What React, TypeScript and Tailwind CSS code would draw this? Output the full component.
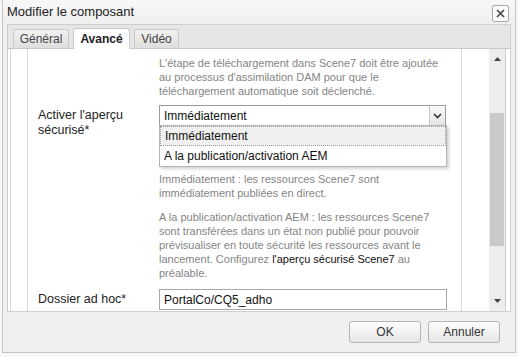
import React from "react"

const font = { fontFamily: '"Liberation Sans", Arial, sans-serif' }

const tabs = [
  { label: "Général", active: false, w: "w-[56px]" },
  { label: "Avancé", active: true, w: "w-[57px]" },
  { label: "Vidéo", active: false, w: "w-[45px]" },
]

function Chevron() {
  return (
    <svg width="9" height="6" viewBox="0 0 9 6">
      <path d="M1 1l3.5 3.5L8 1" fill="none" stroke="#333" strokeWidth="1.6" />
    </svg>
  )
}

export default function App() {
  return (
    <div className="w-[518px] h-[357px] bg-[#f7f7f7] pl-[2px] pr-[2px] pb-[4px]" style={font}>
      <div className="h-full flex flex-col bg-[#f0f0f0] border border-t-0 border-[#c4c4c4]">
        {/* Titre */}
        <div className="h-[24px] flex items-center justify-between pl-[4px] pr-[6px] bg-gradient-to-b from-[#f8f8f8] to-[#efefef]">
          <span className="text-[13px] text-[#222]">Modifier le composant</span>
          <button className="w-[17px] h-[17px] mt-[2px] border border-[#a8a8a8] rounded-[2px] bg-[#fbfbfb] flex items-center justify-center">
            <svg width="9" height="9" viewBox="0 0 9 9">
              <path d="M1 1l7 7M8 1l-7 7" stroke="#444" strokeWidth="1.6" />
            </svg>
          </button>
        </div>

        {/* Onglets + contenu */}
        <div className="mx-[4px] flex flex-col border border-[#cfcfcf] bg-[#e6e6e6]">
          <div className="h-[24px] flex items-end gap-[4px] pl-[5px] border-b border-[#c9c9c9]">
            {tabs.map((t) => (
              <div
                key={t.label}
                className={
                  t.active
                    ? `${t.w} h-[21px] flex items-center justify-center bg-white border border-b-0 border-[#c9c9c9] rounded-t-[3px] text-[12px] font-bold text-[#222] -mb-px`
                    : `${t.w} h-[19px] flex items-center justify-center bg-gradient-to-b from-[#f2f2f2] to-[#dedede] border border-b-0 border-[#c9c9c9] rounded-t-[3px] text-[12px] text-[#444]`
                }
              >
                {t.label}
              </div>
            ))}
          </div>

          <div className="h-[262px] flex bg-white pl-[2px] pr-[4px]">
            <div className="flex-1 flex border-l border-[#d4d4d4]">
              <div className="w-[16px]" />
              <div className="w-[435px] flex flex-col border-l border-r border-[#d8d8d8] pl-[10px]">
                <div className="pl-[121px] pr-[10px] pt-[7px] text-[11px] leading-[14px] text-[#858585]">
                  L'étape de téléchargement dans Scene7 doit être ajoutée au processus d'assimilation DAM pour que le
                  téléchargement automatique soit déclenché.
                </div>

                <div className="flex mt-[7px]">
                  <div className="w-[121px] pt-[3px] text-[12.5px] leading-[15px] text-[#222]">
                    Activer l'aperçu
                    <br />
                    sécurisé*
                  </div>
                  <div className="relative w-[287px]">
                    <div className="h-[21px] flex items-center border border-[#9c9c9c] bg-white">
                      <span className="flex-1 pl-[4px] text-[12px] text-[#111]">Immédiatement</span>
                      <div className="w-[16px] h-[19px] flex items-center justify-center border-l border-[#c8c8c8] bg-gradient-to-b from-[#fafafa] to-[#e4e4e4]">
                        <Chevron />
                      </div>
                    </div>
                    <div className="absolute left-0 top-[20px] w-[288px] border border-[#b5b5b5] bg-white shadow-[2px_2px_3px_rgba(0,0,0,0.18)]">
                      <div className="h-[20px] flex items-center pl-[4px] bg-[#f0f0f0] border border-dotted border-[#9a9a9a] text-[12px] text-[#111]">
                        Immédiatement
                      </div>
                      <div className="h-[20px] flex items-center pl-[4px] text-[12px] text-[#111]">
                        A la publication/activation AEM
                      </div>
                    </div>
                  </div>
                </div>

                <div className="pl-[121px] pr-[10px] mt-[34px] text-[11px] leading-[14px] text-[#858585]">
                  <p>
                    Immédiatement : les ressources Scene7 sont
                    <br />
                    immédiatement publiées en direct.
                  </p>
                  <p className="mt-[10px]">
                    A la publication/activation AEM : les ressources Scene7
                    <br />
                    sont transférées dans un état non publié pour pouvoir
                    <br />
                    prévisualiser en toute sécurité les ressources avant le
                    <br />
                    lancement. Configurez <span className="text-[#111]">l'aperçu sécurisé Scene7</span> au
                    <br />
                    préalable.
                  </p>
                </div>

                <div className="flex items-center mt-[9px]">
                  <div className="w-[121px] text-[12.5px] text-[#222]">Dossier ad hoc*</div>
                  <div className="w-[288px] h-[21px] flex items-center pl-[4px] border border-[#a8a8a8] text-[12px] text-[#111]">
                    PortalCo/CQ5_adho
                  </div>
                </div>
              </div>
              <div className="flex-1" />
              {/* Barre de défilement */}
              <div className="w-[17px] flex flex-col bg-[#ededed] border-r border-[#d0d0d0]">
                <div className="h-[20px] flex items-center justify-center">
                  <svg width="7" height="4" viewBox="0 0 7 4">
                    <path d="M0 4L3.5 0L7 4z" fill="#444" />
                  </svg>
                </div>
                <div className="h-[44px]" />
                <div className="h-[133px] mx-[1px] bg-[#c9c9c9]" />
                <div className="flex-1" />
                <div className="h-[20px] flex items-center justify-center">
                  <svg width="7" height="4" viewBox="0 0 7 4">
                    <path d="M0 0L3.5 4L7 0z" fill="#444" />
                  </svg>
                </div>
              </div>
            </div>
          </div>
        </div>

        {/* Pied */}
        <div className="flex-1 flex items-center justify-end gap-[7px] pr-[15px]">
          {["OK", "Annuler"].map((b) => (
            <button
              key={b}
              className="w-[72px] h-[22px] rounded-[3px] border border-[#b4b4b4] bg-gradient-to-b from-[#fdfdfd] to-[#e6e6e6] text-[12px] text-[#333]"
            >
              {b}
            </button>
          ))}
        </div>
      </div>
    </div>
  )
}
